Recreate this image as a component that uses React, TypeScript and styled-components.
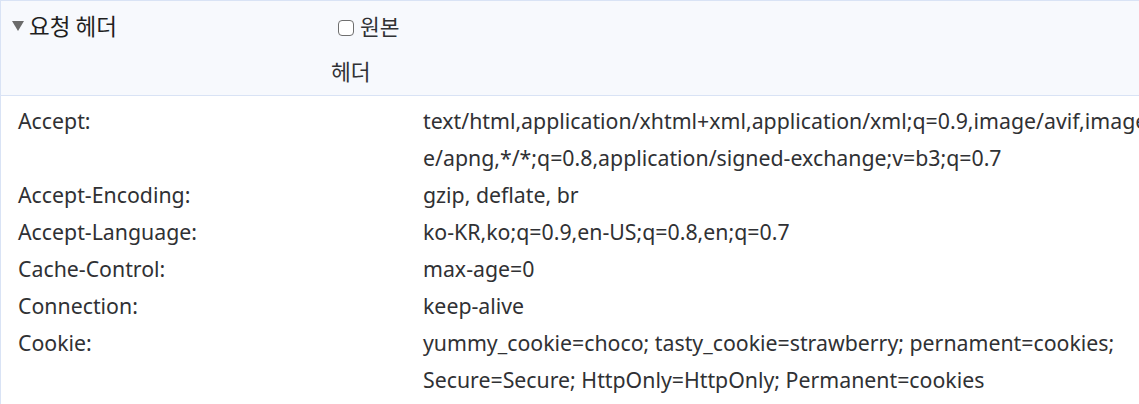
import React from "react";
import styled, { createGlobalStyle } from "styled-components";

const Global = createGlobalStyle`
  html, body { margin: 0; padding: 0; background: #ffffff; }
  body {
    font-family: "Segoe UI", "Noto Sans", "Noto Sans CJK KR", sans-serif;
    color: #202124;
    overflow: hidden;
  }
`;

const Panel = styled.section`
  width: 1139px;
  height: 404px;
  border-left: 1px solid #d9e3f5;
  box-sizing: border-box;
  overflow: hidden;
`;

const HeaderBar = styled.div`
  display: flex;
  align-items: flex-start;
  height: 96px;
  box-sizing: border-box;
  background: #f7f9fd;
  border-top: 1px solid #d9e3f5;
  border-bottom: 1px solid #d9e3f5;
  padding: 2px 0 0 11px;
`;

const Summary = styled.div`
  display: flex;
  align-items: center;
  width: 319px;
  font-family: "Noto Sans CJK KR", sans-serif;
  font-size: 22.5px;
  line-height: 45px;
  color: #1f1f1f;
`;

const Triangle = styled.span`
  width: 0;
  height: 0;
  border-left: 6.5px solid transparent;
  border-right: 6.5px solid transparent;
  border-top: 10px solid #6b6b6b;
  margin: 1px 5px 0 0;
`;

const RawLabel = styled.label`
  width: 100px;
  word-break: keep-all;
  font-family: "Noto Sans CJK KR", sans-serif;
  font-size: 21.5px;
  line-height: 45px;
  color: #303134;
`;

const Box = styled.span`
  display: inline-block;
  width: 14px;
  height: 14px;
  border: 1.5px solid #6f6f6f;
  border-radius: 4px;
  margin: 0 6px 0 7px;
  vertical-align: -1px;
  background: #ffffff;
`;

const Rows = styled.div`
  display: grid;
  grid-template-columns: 405px 1fr;
  padding: 6px 0 0 17px;
  font-size: 21.3px;
  line-height: 37px;
  color: #303134;
`;

const Name = styled.div``;

const Value = styled.div`
  white-space: nowrap;
`;

const rows: [string, string[]][] = [
  ["Accept:", [
    "text/html,application/xhtml+xml,application/xml;q=0.9,image/avif,image/webp,imag",
    "e/apng,*/*;q=0.8,application/signed-exchange;v=b3;q=0.7",
  ]],
  ["Accept-Encoding:", ["gzip, deflate, br"]],
  ["Accept-Language:", ["ko-KR,ko;q=0.9,en-US;q=0.8,en;q=0.7"]],
  ["Cache-Control:", ["max-age=0"]],
  ["Connection:", ["keep-alive"]],
  ["Cookie:", [
    "yummy_cookie=choco; tasty_cookie=strawberry; pernament=cookies;",
    "Secure=Secure; HttpOnly=HttpOnly; Permanent=cookies",
  ]],
];

export default function App() {
  return (
    <>
      <Global />
      <Panel>
        <HeaderBar>
          <Summary>
            <Triangle />요청 헤더
          </Summary>
          <RawLabel>
            <Box />원본 헤더
          </RawLabel>
        </HeaderBar>
        <Rows>
          {rows.map(([n, v]) => (
            <React.Fragment key={n}>
              <Name>{n}</Name>
              <Value>
                {v.map((line, i) => (
                  <div key={i}>{line}</div>
                ))}
              </Value>
            </React.Fragment>
          ))}
        </Rows>
      </Panel>
    </>
  );
}
